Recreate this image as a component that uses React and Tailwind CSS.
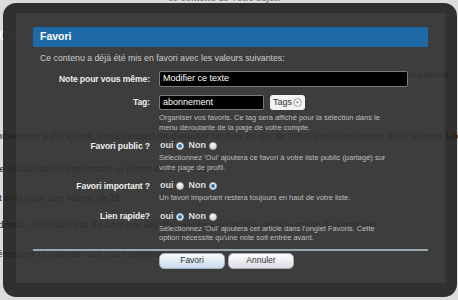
import React from "react";

const Radio = ({ on, className = "" }) =>
  on ? (
    <span className={"flex h-[8px] w-[8px] items-center justify-center rounded-full border border-[#8fa6b8] bg-white " + className}>
      <span className="h-[4px] w-[4px] rounded-full bg-[#2f74ad]" />
    </span>
  ) : (
    <span className={"block h-[8px] w-[8px] rounded-full border border-[#b5b5b5] bg-gradient-to-b from-white to-[#d4d4d4] " + className} />
  );

const Row = ({ label, children, className = "" }) => (
  <div className={"flex items-center " + className}>
    <div className="w-[117px] shrink-0 text-right text-[8.6px] font-bold tracking-[-0.1px] text-[#eeeeee]">{label}</div>
    <div className="ml-[9px] flex items-center">{children}</div>
  </div>
);

const Help = ({ children, className = "" }) => (
  <div className={"ml-[126px] text-[7.5px] leading-[9.5px] text-[#bdbdbd] " + className}>{children}</div>
);

const Choice = ({ oui }) => (
  <div className="flex items-center text-[9px] font-bold text-[#dddddd]">
    <span className="ml-[1px]">oui</span>
    <Radio on={oui} className="ml-[2px]" />
    <span className="ml-[5px]">Non</span>
    <Radio on={!oui} className="ml-[3px]" />
  </div>
);

export default function App() {
  return (
    <div className="relative h-[300px] w-[458px] overflow-hidden bg-[#dcdcdc] font-['Liberation_Serif',serif] text-[#222]">
      {/* page behind the modal */}
      <div className="flex flex-col text-[11px] leading-[14px]">
        <div className="mt-[-10px] h-[14px] whitespace-nowrap pl-[168px] text-[#666]">ce contenu de votre sujet.</div>
        <div className="mt-[21px] ml-[-22px] h-[20px] whitespace-nowrap font-['Liberation_Sans',sans-serif] text-[17px] leading-[20px] text-[#ffffff]">Abonnement</div>
        <div className="mt-[23px] h-[14px] whitespace-nowrap pl-[380px] font-['Liberation_Sans',sans-serif] text-[8px]">pour votre parcours</div>
        <div className="mt-[46px] h-[14px] whitespace-nowrap ml-[-14px]">abonnement a été ajouté, vous permettant d'ajouter un lien en dur de votre site directement dans la barre latérale</div>
        <div className="mt-[19px] h-[14px] whitespace-nowrap ml-[-6px]">de visualisation importante et direct de votre site.</div>
        <div className="mt-[15px] h-[14px] whitespace-nowrap ml-[-6px]">et avis pour une valeur de 2€</div>
        <div className="mt-[13px] h-[14px] whitespace-nowrap ml-[-10px]">Adresse, n'oubliez pas d'éditer vos détails, ajoutera cet article dans le menu de votre site.</div>
        <div className="mt-[15px] h-[14px] whitespace-nowrap ml-[-8px]">générions la journée sauf cas exception</div>
      </div>

      {/* modal */}
      <div className="absolute left-[3px] top-[3px] h-[294px] w-[454px] rounded-[13px] bg-[rgba(33,33,33,0.92)] pb-[14px] pl-[13px] pr-[12px] pt-[10px] font-['Liberation_Sans',sans-serif]">
        <div className="flex h-full flex-col bg-[rgba(255,255,255,0.065)] px-[17px] pt-[14px]">
          <div className="flex h-[20px] items-center rounded-[2px] bg-[#1f6aa6] pl-[7px] text-[10.5px] font-bold text-white">Favori</div>
          <div className="mt-[6px] flex h-[12px] items-center pl-[7px] text-[8.75px] text-[#cccccc]">
            Ce contenu a déjà été mis en favori avec les valeurs suivantes:
          </div>

          <Row label="Note pour vous même:" className="mt-[6px] h-[16px]">
            <div className="flex h-[16px] w-[249px] items-center rounded-[2px] border border-[#7a7a7a] bg-black pl-[3px] text-[9px] text-white">
              Modifier ce texte
            </div>
          </Row>

          <Row label="Tag:" className="mt-[8px] h-[15px]">
            <div className="flex h-[15px] w-[105px] items-center rounded-[2px] border border-[#7a7a7a] bg-black pl-[3px] text-[9px] text-white">
              abonnement
            </div>
            <div className="ml-[6px] flex h-[15px] w-[35px] items-center justify-center rounded-[3px] bg-[#f2f2f2] text-[9px] text-[#333]">
              <span>Tags</span>
              <svg width="9" height="9" viewBox="0 0 10 10" className="ml-[1px]">
                <circle cx="5" cy="5" r="4.2" fill="#fafafa" stroke="#8a8a8a" strokeWidth="0.9" />
                <path d="M3 4 L5 6.3 L7 4 Z" fill="#8a8a8a" />
              </svg>
            </div>
          </Row>
          <Help className="mt-[3px]">
            Organiser vos favoris. Ce tag sera affiché pour la sélection dans le
            <br />
            menu déroulante de la page de votre compte.
          </Help>

          <Row label="Favori public ?" className="mt-[8px] h-[12px]">
            <Choice oui={true} />
          </Row>
          <Help className="mt-[1px]">
            Sélectionnez 'Oui' ajoutera ce favori à votre liste public (partagé) sur
            <br />
            votre page de profil.
          </Help>

          <Row label="Favori important ?" className="mt-[8px] h-[12px]">
            <Choice oui={false} />
          </Row>
          <Help className="mt-[1px]">Un favori important restera toujours en haut de votre liste.</Help>

          <Row label="Lien rapide?" className="mt-[8px] h-[12px]">
            <Choice oui={true} />
          </Row>
          <Help className="mt-[1px]">
            Sélectionnez 'Oui' ajoutera cet article dans l'onglet Favoris. Cette
            <br />
            option nécessite qu'une note soit entrée avant.
          </Help>

          <div className="mt-[6px] h-[2px] bg-[#9aa7ae]" />

          <div className="mt-[2px] flex gap-[3px] pl-[126px]">
            <div className="flex h-[16px] w-[66px] items-center justify-center rounded-[5px] border border-[#9fb0c0] bg-gradient-to-b from-[#f7fafd] to-[#c9dcec] text-[8.5px] text-[#333]">
              Favori
            </div>
            <div className="flex h-[16px] w-[66px] items-center justify-center rounded-[5px] border border-[#a9a9b4] bg-gradient-to-b from-white to-[#dcdce6] text-[8.5px] text-[#333]">
              Annuler
            </div>
          </div>
        </div>
      </div>
    </div>
  );
}
